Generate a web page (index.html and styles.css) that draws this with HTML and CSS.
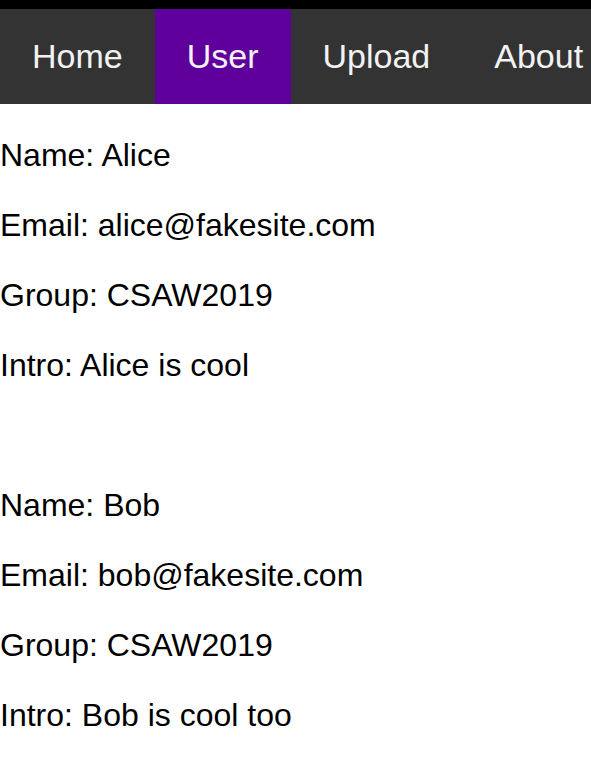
FILE: index.html
```html
<!DOCTYPE html>
<html>
<head>
<meta charset="utf-8">
<link rel="stylesheet" href="styles.css">
</head>
<body>
<div class="strip"></div>
<nav class="topnav">
  <a href="#" class="nav-link">Home</a>
  <a href="#" class="nav-link active">User</a>
  <a href="#" class="nav-link">Upload</a>
  <a href="#" class="nav-link">About</a>
</nav>
<main class="users">
  <div class="user">
    <p class="field">Name: Alice</p>
    <p class="field">Email: alice@fakesite.com</p>
    <p class="field">Group: CSAW2019</p>
    <p class="field">Intro: Alice is cool</p>
  </div>
  <div class="user">
    <p class="field">Name: Bob</p>
    <p class="field">Email: bob@fakesite.com</p>
    <p class="field">Group: CSAW2019</p>
    <p class="field">Intro: Bob is cool too</p>
  </div>
</main>
</body>
</html>
```
FILE: styles.css
```css
html, body {
  margin: 0;
  padding: 0;
  background: #ffffff;
}
body {
  font-family: "Liberation Sans", Arial, sans-serif;
  color: #000;
  overflow: hidden;
}
.strip {
  height: 9px;
  background: #000;
}
.topnav {
  display: flex;
  background: #333333;
  white-space: nowrap;
  overflow: hidden;
}
.nav-link {
  flex: none;
  color: #f2f2f2;
  text-decoration: none;
  font-size: 34px;
  line-height: 39px;
  padding: 28px 32px;
  text-align: center;
}
.nav-link.active {
  background: #60009c;
}
.user + .user {
  margin-top: 102px;
}
.field {
  font-size: 32px;
  line-height: 38px;
  margin: 32px 0;
}
```
